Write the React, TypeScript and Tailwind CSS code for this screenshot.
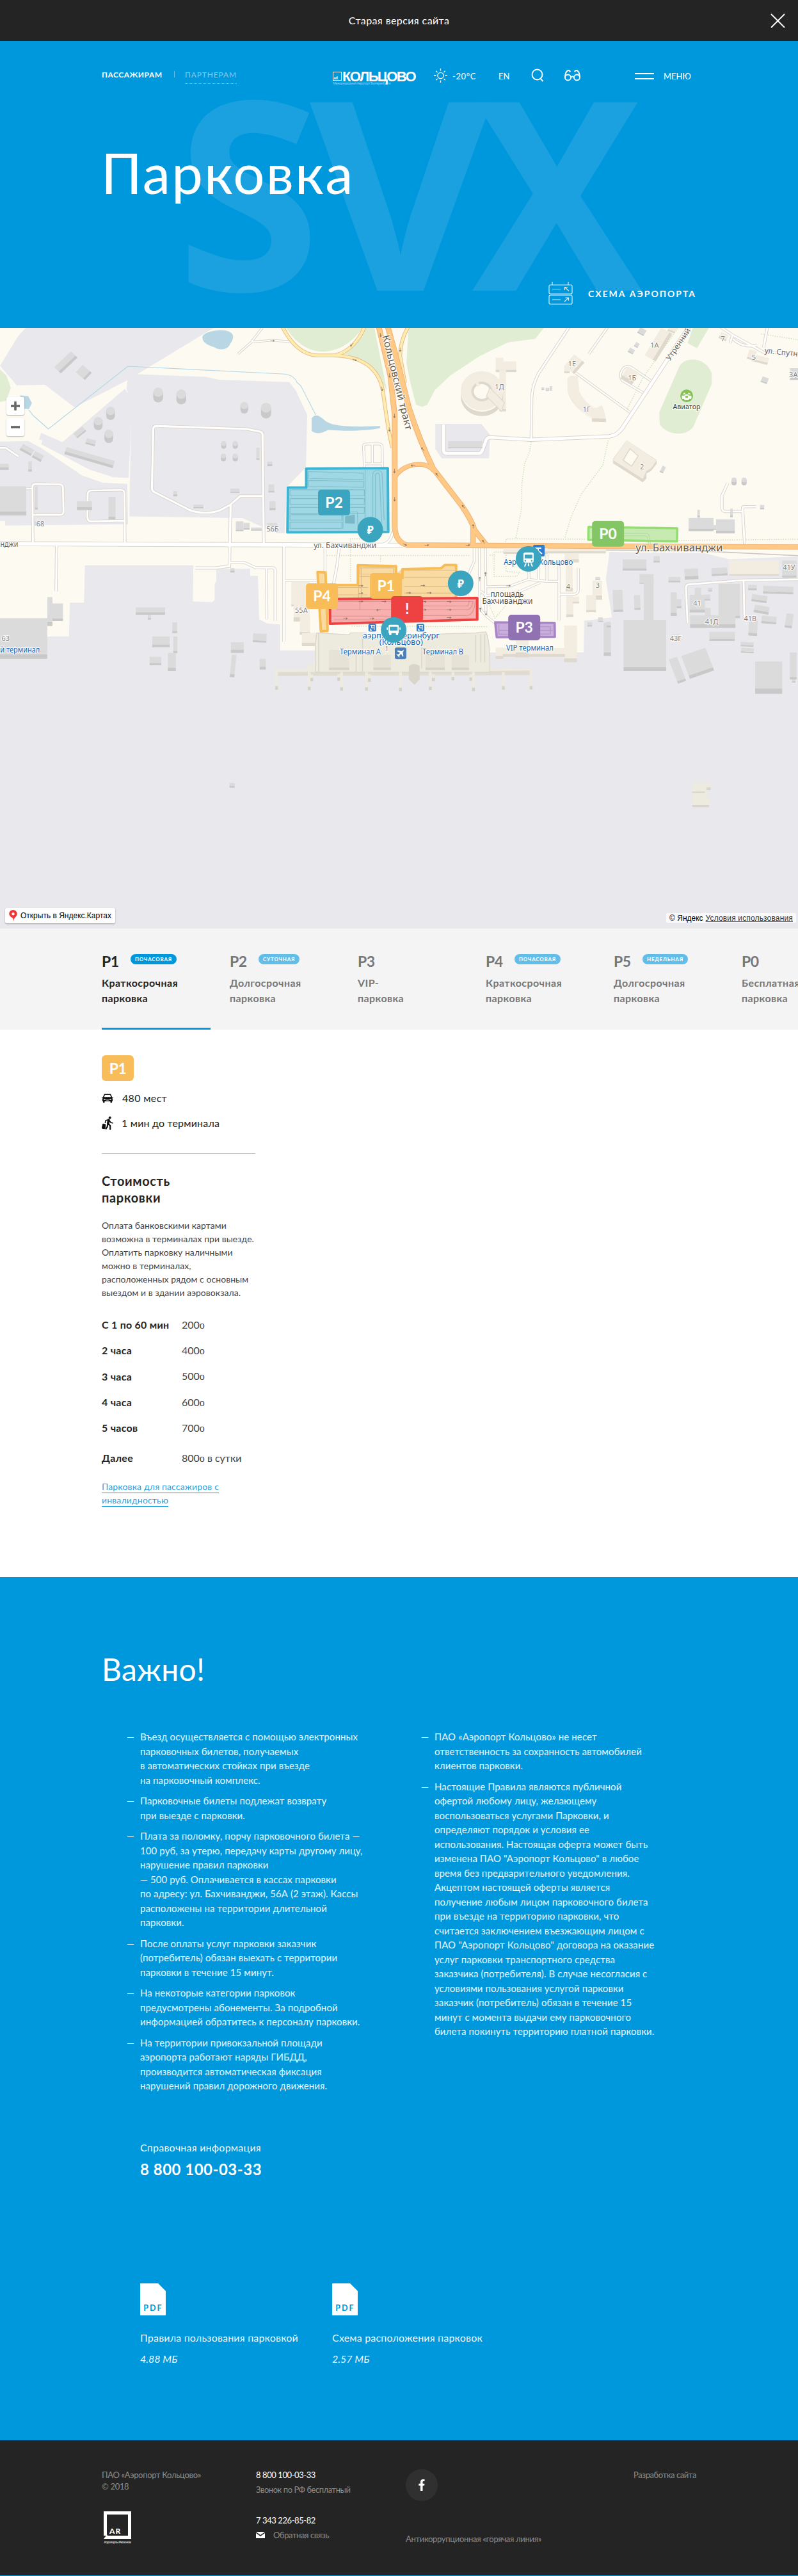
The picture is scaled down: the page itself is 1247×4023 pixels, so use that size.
import React from "react";

/* ---------- Map data (drawing units, left half starts at 0, right half at 1536) ---------- */

const SX = 0.40179;
const SY = 0.38265;
const RX = 1535.6;

type Road = { d: string; w: number };

const LAND = [
  "M105,0 L840,0 L490,222 L290,330 L175,238 L65,240 L0,160 L70,40 Z",
  "M498,193 L800,205 L850,217 L1125,227 L1150,260 L1195,360 L1190,575 L1115,655 L1108,843 L1075,843 L943,782 L503,775 L505,640 L512,300 L492,255 Z",
  "M485,255 L515,290 L500,618 L440,615 L350,585 L160,480 L165,465 L152,460 L160,434 L243,472 Z",
  "M0,470 L110,467 L160,495 L320,608 L400,637 L495,642 L498,807 L20,812 L20,793 L0,793 Z",
  "M0,1265 L268,1265 L272,1127 L327,1127 L330,975 L752,975 L750,1122 L825,1125 L835,1115 L835,1050 L841,1040 L841,990 L973,988 L973,1017 L1003,1017 L1008,1195 L1040,1212 L1090,1216 L1090,1322 L1225,1322 L1225,1330 L2270,1330 L2272,1200 L2380,1187 L2356,1030 L2371,920 L2741,925 L2836,950 L3110,938 L3110,2470 L0,2470 Z",
  "M1693,397 L1872,397 L1906,442 L1902,538 L1718,538 L1693,500 Z",
];
const GREEN = [
  "M0,175 L25,200 L42,250 L25,302 L0,308 Z",
  "M1110,0 L1412,0 C1350,110 1200,160 1110,0 Z",
  "M1424,0 L1455,0 L1505,262 L1465,190 L1400,135 L1340,110 Z",
  "M1590,0 L2120,0 L2081,50 L1976,65 L1866,120 L1751,200 L1691,260 L1661,320 L1641,328 L1618,318 L1596,230 L1581,150 L1586,50 Z",
  "M2641,165 C2660,120 2745,122 2768,190 L2768,235 L2696,410 C2666,450 2596,445 2566,400 L2564,350 Z",
  "M2696,0 L2760,0 L2711,88 L2674,68 Z",
];
const WATER = [
  "M787,45 C790,20 850,10 885,18 C915,28 910,50 893,75 C885,95 850,98 835,85 C810,75 790,70 787,45 Z",
  "M78,280 L110,284 L124,312 L112,337 L92,335 Z",
  "M1212,375 C1225,355 1240,360 1265,385 C1290,405 1350,412 1478,406 L1478,415 C1400,430 1330,425 1275,422 C1245,440 1225,438 1212,425 Z",
];
const ROADS: Road[] = [
  { d: "M0,886 L1568,893", w: 15 },
  { d: "M128,880 L126,655 Q126,642 140,642 L232,644 Q245,645 245,660 L247,755 Q247,769 232,769 L128,769", w: 7 },
  { d: "M0,662 L124,662", w: 5 },
  { d: "M486,880 L484,680 Q484,667 470,667 L355,669 Q341,670 341,685 L340,780 Q342,795 355,795 L484,792", w: 7 },
  { d: "M220,890 L218,1080", w: 7 },
  { d: "M0,495 L22,495 L72,530", w: 7 },
  { d: "M1026,885 L1021,440 Q1020,430 1008,428 L960,418 L610,406 Q596,406 596,418 L591,660 Q592,672 600,675 L740,750 Q800,770 855,750 L895,728 L934,692 L1021,692", w: 8 },
  { d: "M897,728 L892,978 L840,985 L760,985", w: 8 },
  { d: "M892,963 L950,963 L994,984 L1060,984 Q1070,986 1070,995 L1070,1200", w: 7 },
  { d: "M1036,985 L1038,1195", w: 6 },
  { d: "M1104,895 L1104,1285", w: 7 },
  { d: "M1104,1036 L1264,1036 L1264,895", w: 6 },
  { d: "M1320,895 L1310,980 L1292,1080", w: 7 },
  { d: "M1418,575 L1414,490 Q1414,479 1425,479 L1476,479 Q1486,480 1486,492 L1488,575 M1448,479 L1448,560 M1418,560 L1488,560", w: 6 },
  { d: "M1490,888 Q1522,880 1528,835", w: 7 },
  { d: "M1020,5 L978,63 L925,112 M978,63 L1060,56 L1130,62", w: 5 },
  { d: "M1725,400 L1725,505 Q1726,518 1740,518 L1862,518 Q1872,517 1876,505 L1890,465 Q1894,452 1908,452 L2066,462 L2370,448 Q2400,445 2420,415 L2680,0", w: 12 },
  { d: "M2066,462 L2068,290 Q2070,240 2095,190 L2215,0", w: 7 },
  { d: "M2365,0 L2290,112", w: 6 },
  { d: "M2450,350 L2240,190", w: 6 },
  { d: "M2500,270 L2420,220 Q2405,195 2425,170 Q2440,155 2460,170 L2530,220", w: 6 },
  { d: "M2800,0 L2850,35 L2970,105 L3110,110 M2850,30 L2840,68 M2850,50 Q2890,90 2945,75 M2970,85 L2985,0", w: 7 },
  { d: "M2896,890 L2888,740 Q2888,735 2898,735 L2940,735 M2888,755 L2820,755 Q2808,753 2808,740 L2808,690 L2830,640", w: 7 },
  { d: "M2674,1210 L2668,1065 Q2668,1053 2680,1052 L2890,1035 L3110,1032 M2892,1035 L2895,1190", w: 7 },
  { d: "M1844,900 L1844,960 L1818,1020 L1818,1100 M1864,900 L1866,1140 Q1868,1170 1940,1220 M1888,900 L1890,1180", w: 6 },
  { d: "M1890,1062 L1980,1060 L2055,1032 L2125,1040 L2174,1040 M1870,1080 L1890,1098 L2010,1086 L2100,1045 M2057,1000 L2057,1035 M2092,930 L2094,1035 M2127,930 L2127,1038 M2174,960 L2174,1200 M2174,1092 L2235,1092 Q2249,1090 2249,1075 L2249,985", w: 6 },
];
const ORANGE: Road[] = [
  { d: "M1473,0 L1518,200 L1535,360 L1535,820 Q1540,882 1585,892 L3110,900", w: 17 },
  { d: "M1508,0 L1540,120 L1590,330 Q1630,460 1685,580 L1795,730 Q1835,790 1845,830 L1890,890", w: 17 },
  { d: "M1538,610 Q1570,565 1626,562 Q1670,562 1688,590", w: 14 },
  { d: "M1840,815 L1840,890", w: 16 },
];
const YELLOW: Road[] = [
  { d: "M1098,0 Q1150,110 1230,118 L1300,118 C1360,105 1400,50 1418,0", w: 10 },
  { d: "M1300,118 C1430,122 1480,190 1490,270 C1502,360 1512,440 1526,495", w: 10 },
  { d: "M1588,0 Q1556,60 1556,120 L1575,230", w: 10 },
];
const PATHS = [
  "M1272,934 L1830,934",
  "M1363,1040 L1363,866 L1430,866 M1480,938 L1480,960",
  "M1368,1223 L1900,1225",
  "M2066,470 L2060,510 L2040,560 L2030,640 L2029,740 L2006,866 M1966,880 L1970,866 L2280,868",
  "M2365,465 L2345,565 L2260,685 L2220,780 L2196,866",
  "M2640,873 L3110,868",
  "M1904,933 L1925,933 M1967,920 L1922,920 L1922,1020 L2010,1020 L2020,1003 L1968,1000 L1968,925",
  "M2440,335 L2500,210 L2640,0",
  "M1900,1130 L1925,1190 L1990,1110",
  "M2960,30 L3110,55",
];

/* x, y, width, height, depth of the shaded side, rotation */
type Box = [number, number, number, number, number, number?];
const GREY: Box[] = [
  [206, 130, 92, 24, 12, -45], [302, 165, 40, 38, 10, -48],
  [285, 420, 46, 18, 7, -40], [335, 460, 38, 16, 8, 15], [252, 520, 196, 18, 12, 17],
  [82, 490, 50, 18, 10, 30], [130, 517, 40, 18, 10, 30],
  [110, 550, 14, 32, 10], [0, 560, 34, 14, 11], [136, 652, 11, 86, 9], [0, 652, 102, 102, 17],
  [299, 713, 59, 24, 12], [422, 695, 27, 80, 12], [134, 795, 28, 14, 3],
  [674, 672, 15, 12, 9], [752, 727, 39, 9, 6], [896, 661, 35, 12, 6],
  [997, 494, 12, 43, 7], [1040, 551, 19, 11, 8], [1044, 644, 23, 26, 7], [1048, 713, 24, 27, 10],
  [917, 795, 30, 34, 6], [947, 801, 24, 22, 6], [976, 820, 42, 7, 6], [1040, 802, 38, 30, 5],
  [184, 1104, 20, 100, 18], [204, 1130, 41, 60, 12], [0, 1190, 184, 148, 18],
  [528, 1146, 114, 20, 10], [575, 1176, 12, 12, 8], [670, 1207, 19, 35, 9], [592, 1265, 68, 32, 12],
  [674, 1265, 16, 60, 8], [653, 1332, 31, 60, 14], [582, 1348, 45, 25, 9],
  [898, 1288, 50, 30, 14], [984, 1253, 53, 28, 8, 3], [898, 1340, 18, 78, 13, 5], [1010, 1356, 24, 32, 12],
  [896, 986, 16, 10, 8],
  [1743, 468, 133, 24, 5],
  [2106, 248, 10, 8, 3], [2122, 250, 14, 10, 4], [2138, 243, 10, 14, 4],
  [2484, 8, 28, 20, 6, 30], [2470, 66, 16, 14, 5, 30], [2446, 90, 22, 14, 6, 30], [2572, 570, 14, 22, 6, 25],
  [2962, 207, 26, 18, 6, 20], [3072, 170, 32, 36, 12],
  [2712, 748, 10, 22, 10], [2840, 743, 10, 26, 10], [2956, 728, 16, 10, 8],
  [2678, 781, 97, 43, 11], [2775, 810, 12, 14, 6], [2785, 787, 73, 45, 12],
  [2422, 950, 92, 36, 10], [2542, 937, 24, 18, 8], [2600, 1022, 46, 14, 8], [2662, 988, 53, 30, 14, -3],
  [2767, 984, 62, 24, 9, -3], [2487, 1010, 55, 36, 4], [2504, 1040, 38, 158, 1], [2384, 1075, 38, 80, 10, -2],
  [2466, 1096, 24, 52, 8, -2], [2608, 1085, 24, 82, 14], [2632, 1113, 18, 27, 10],
  [2425, 1197, 166, 193, 16], [2348, 1208, 28, 122, 14], [2284, 1206, 19, 12, 6], [2360, 1205, 15, 14, 9],
  [2326, 1187, 19, 14, 4], [2315, 1022, 19, 10, 3],
  [2682, 1095, 60, 60, 12], [2702, 1065, 25, 30, 0], [2740, 1094, 22, 18, 6], [2794, 1050, 84, 130, 10],
  [2684, 1178, 176, 36, 16], [2742, 1148, 22, 40, 0], [2754, 1066, 16, 10, 5], [2759, 1246, 99, 28, 9],
  [2612, 1256, 34, 20, 6], [2912, 1200, 34, 50, 12, 3], [2968, 1060, 118, 22, 9, 2], [2910, 1054, 34, 14, 8, 3],
  [2924, 1096, 60, 20, 9, 8], [2934, 1140, 58, 20, 11, 10], [2962, 1182, 58, 22, 9, 5], [3056, 1172, 28, 48, 10, 8],
  [2881, 1288, 50, 12, 6, 3], [2882, 1312, 50, 14, 6, 3], [2937, 1367, 105, 110, 22], [2661, 1325, 100, 85, 14, -20],
  [2616, 1350, 34, 95, 10, -20], [3042, 955, 56, 60, 10], [3072, 1330, 26, 100, 10], [3080, 1440, 14, 8, 5],
  [893, 1863, 20, 11, 8],
];
const BEIGE: Box[] = [
  [1928, 127, 30, 20, 8], [1928, 142, 80, 34, 10], [1942, 176, 26, 160, 10],
  [2198, 130, 62, 40, 12, -50], [2194, 160, 22, 22, 8],
  [2490, 52, 130, 36, 14, -60], [2600, 0, 30, 16, 8, 20], [2428, 172, 52, 42, 16, 30],
  [2910, 96, 30, 32, 8, 15], [2926, 120, 64, 20, 9, 15], [2800, 28, 32, 18, 9, 25],
  [2836, 954, 193, 56, 7], [1958, 905, 172, 14, 9], [2120, 907, 236, 10, 9],
  [2196, 925, 55, 24, 14], [2200, 962, 28, 103, 16], [2202, 1100, 28, 74, 12], [2228, 1102, 24, 20, 8],
  [2304, 1037, 38, 60, 18], [2280, 1096, 38, 60, 10],
  [2194, 1220, 50, 134, 16], [1928, 1310, 30, 34, 12], [1955, 1312, 242, 24, 12], [2006, 1280, 50, 50, 20],
  [1133, 1042, 72, 92, 8], [1142, 1130, 62, 56, 18], [1166, 1180, 40, 66, 12], [1174, 1250, 60, 40, 14],
];
const TANKS: [number, number, number][] = [
  [615, 268, 19], [705, 276, 19], [950, 322, 15], [1035, 331, 20], [430, 344, 17], [382, 386, 17], [423, 438, 17],
  [870, 477, 10], [915, 477, 10], [869, 528, 10], [915, 528, 10], [2855, 626, 10], [2894, 626, 10],
];
const PIERS: [number, number, number][] = [
  [1070, 1400, 80], [1197, 1410, 72], [1207, 1420, 26], [1312, 1420, 24], [1323, 1410, 74], [1420, 1410, 74], [1431, 1420, 28],
  [1552, 1410, 76], [1668, 1410, 72], [1680, 1420, 26], [1756, 1410, 32], [1826, 1420, 24], [1836, 1410, 76], [1952, 1410, 70], [2060, 1395, 84],
];
const ARROWS: [number, number, number][] = [
  [1480, 35, 80], [1515, 200, 85], [1534, 365, 90], [1534, 590, 90], [1535, 705, 90], [1486, 255, 80], [1514, 420, 85],
  [1380, 136, 25], [1060, 58, 0], [1368, 75, 135], [1556, 95, 90], [1644, 500, 230], [1606, 567, 180], [1700, 605, 230],
  [1802, 735, 230], [1840, 815, 270], [1880, 878, 240], [1660, 892, 0], [1820, 892, 0], [1575, 890, 30],
  [1404, 1058, 0], [1404, 1088, 0], [1404, 1122, 0], [1494, 1122, 0], [1472, 1157, 180], [1344, 1192, 0], [1447, 1192, 0],
  [1645, 1057, 0], [1590, 1087, 0], [1670, 1087, 0], [1650, 1123, 0], [1747, 1123, 0], [1650, 1156, 0], [1747, 1156, 0], [1747, 1188, 0],
  [1866, 1030, 270], [1888, 1010, 270], [1868, 1155, 270], [1890, 1170, 90], [1978, 1058, 0],
];

function MapBox({ b, top, side }: { b: Box; top: string; side: string }) {
  const [x, y, w, h, d, r] = b;
  return (
    <g transform={r ? `rotate(${r} ${x + w / 2} ${y + h / 2})` : undefined}>
      <rect x={x} y={y + h} width={w} height={d} fill={side} />
      <rect x={x} y={y} width={w} height={h} fill={top} />
    </g>
  );
}

/* Label centred on a point given in drawing units */
function Label(p: { x: number; y: number; s?: number; c?: string; r?: number; len?: number; children: string }) {
  const px = p.x * SX;
  const py = p.y * SY;
  return (
    <text
      x={px}
      y={py}
      dy="0.35em"
      textAnchor="middle"
      fontSize={p.s ?? 12}
      fill={p.c ?? "#8a857c"}
      stroke="#fff"
      strokeOpacity={0.75}
      strokeWidth={2.5}
      strokeLinejoin="round"
      paintOrder="stroke"
      textLength={p.len}
      lengthAdjust="spacingAndGlyphs"
      transform={p.r ? `rotate(${p.r} ${px} ${py})` : undefined}
    >
      {p.children}
    </text>
  );
}

function Badge({ x, y, c, t }: { x: number; y: number; c: string; t: string }) {
  return (
    <g>
      <rect x={x * SX} y={y * SY} width={50} height={40} rx={5} fill={c} />
      <text x={x * SX + 25} y={y * SY + 28} textAnchor="middle" fontSize={23} fontWeight={700} fill="#fff" fontFamily="Lato">
        {t}
      </text>
    </g>
  );
}

function AirportMap() {
  const blue = "#1a66b5";
  return (
    <svg className="block h-[938px] w-full" viewBox="0 2 1247 938" fontFamily="'Noto Sans', sans-serif">
      <rect width="1247" height="942" fill="#fdfbf1" />
      <g transform={`scale(${SX} ${SY})`}>
        {LAND.map((d) => <path key={d} d={d} fill="#e9e8ed" />)}
        {GREEN.map((d) => <path key={d} d={d} fill="#e0edd2" />)}
        {WATER.map((d) => <path key={d} d={d} fill="#b9d6e4" />)}
        <path d="M112,340 L128,362 L188,418 L497,162 L1110,194 Q1145,200 1155,228 L1170,242 L1228,360" fill="none" stroke="#b5d7e6" strokeWidth="3" />
        {PATHS.map((d) => <path key={d} d={d} fill="none" stroke="#cfe0bd" strokeWidth="4" strokeDasharray="4 5" />)}
        {ROADS.map((r) => <path key={r.d} d={r.d} fill="none" stroke="#dad4cb" strokeWidth={r.w + 5} />)}
        {ROADS.map((r) => <path key={r.d} d={r.d} fill="none" stroke="#fff" strokeWidth={r.w} />)}
        {YELLOW.map((r) => <path key={r.d} d={r.d} fill="none" stroke="#e8bd86" strokeWidth={r.w + 5} />)}
        {YELLOW.map((r) => <path key={r.d} d={r.d} fill="none" stroke="#ffecb0" strokeWidth={r.w} />)}
        {ORANGE.map((r) => <path key={r.d} d={r.d} fill="none" stroke="#eeb277" strokeWidth={r.w + 5} />)}
        {ORANGE.map((r) => <path key={r.d} d={r.d} fill="none" stroke="#ffc985" strokeWidth={r.w} />)}
        <path d="M2356,912 L2700,915 L3110,935" fill="none" stroke="#c9c6c4" strokeWidth="4" />

        {GREY.map((b, i) => <MapBox key={i} b={b} top="#dbdbdb" side="#c9c9c9" />)}
        {BEIGE.map((b, i) => <MapBox key={i} b={b} top="#f2ece1" side="#dfd8cc" />)}
        {TANKS.map(([x, y, r]) => (
          <g key={`${x}-${y}`}>
            <path d={`M${x - r},${y} v${r * 1.2} a${r},${r} 0 0 0 ${r * 2},0 v${-r * 1.2} z`} fill="#c9c9c9" />
            <circle cx={x} cy={y} r={r} fill="#dbdbdb" />
          </g>
        ))}

        {/* round office building */}
        <path d="M1792,265 a80,80 0 0 0 165,0 v22 a82,78 0 0 1 -165,0 z" fill="#dfd8cc" />
        <ellipse cx="1874" cy="262" rx="82" ry="80" fill="#f2ece1" />
        <ellipse cx="1874" cy="265" rx="36" ry="35" fill="#fdfbf1" stroke="#dfd8cc" strokeWidth="10" />
        <path d="M1905,250 L1962,310 L1950,346 L1892,284 Z" fill="#f2ece1" stroke="#dfd8cc" strokeWidth="3" />
        <path d="M1848,225 l10,-5 l8,22 l-10,4z" fill="#f2ece1" />
        {/* curved residential block */}
        <path d="M2206,215 Q2212,195 2247,203 L2253,265 Q2280,320 2320,333 L2340,320 Q2355,350 2357,390 L2302,388 L2302,370 Q2225,330 2207,262 Z" fill="#f2ece1" />
        <path d="M2207,262 L2214,280 Q2240,340 2302,373 L2302,388 L2357,390 L2357,376 L2300,374 Q2225,330 2207,262 Z" fill="#dfd8cc" />
        {/* school */}
        <path d="M2437,464 L2554,545 L2554,560 L2532,590 L2514,600 L2514,620 L2500,636 L2384,558 L2384,540 Z" fill="#dfd8cc" />
        <path d="M2437,464 L2554,547 L2532,578 L2514,590 L2500,622 L2384,545 Z" fill="#f2ece1" />
        <path d="M2450,498 L2482,528 L2456,570 L2424,545 Z" fill="#fdfbf1" stroke="#dfd8cc" strokeWidth="4" />

        {/* terminal building with piers */}
        <path d="M1072,1398 L1197,1398 L1197,1380 L1225,1380 L1225,1410 L2070,1393 L2070,1422 L1072,1426 Z" fill="#dfdbd0" />
        <path d="M1072,1398 L1195,1398 L1195,1380 L1225,1380 L1225,1410 L1080,1410 Z M1905,1395 L2072,1393 L2072,1404 L1905,1406 Z" fill="#edeae0" />
        <path d="M1232,1250 L1358,1258 L1362,1250 L1424,1250 L1424,1262 L1640,1262 L1700,1255 L1850,1250 L1890,1246 Q1908,1290 1905,1410 L1228,1410 Q1222,1300 1232,1250 Z" fill="#edeade" stroke="#d9d4c9" strokeWidth="3" />
        {PIERS.map(([x, y, h]) => (
          <g key={`${x}-${y}`}>
            <rect x={x} y={y} width={11} height={h - 12} fill="#edeae0" />
            <rect x={x} y={y + h - 12} width={11} height={14} fill="#d6d1c6" />
          </g>
        ))}
        <path d="M1280,1320 h78 v78 h-78 z M1452,1340 h68 v58 h-68 z M1655,1320 h75 v78 h-75 z M1757,1340 h67 v58 h-67 z" fill="#e6e2d6" />
        <path d="M1280,1392 h78 v10 h-78 z M1452,1392 h68 v10 h-68 z M1655,1392 h75 v10 h-75 z M1757,1392 h67 v10 h-67 z" fill="#d8d3c8" />
        <path d="M1240,1252 v158 M1385,1320 v90 M1410,1260 v150 M1640,1265 v130 M1850,1260 v110 M1870,1255 v115 M1885,1255 v115" stroke="#dcd7cb" strokeWidth="4" />
        <path d="M1590,1385 Q1610,1370 1632,1385 V1440 L1612,1462 L1590,1440 Z" fill="#dad5ca" />

        {/* parking zones */}
        <path d="M1191,580 L1508,578 L1510,838 L1118,840 L1120,657 L1191,657 Z" fill="#9fd8e4" />
        <path d="M1200,592 L1413,598 V624 L1200,620 Z M1200,628 L1415,632 V656 L1200,652 Z M1128,666 H1417 V690 H1128 Z M1128,702 H1417 V726 H1128 Z M1128,738 H1417 V762 H1128 Z M1128,768 H1330 V790 H1128 Z M1128,798 H1330 V824 H1128 Z M1420,585 V790 M1450,800 V600 Q1452,588 1468,588 Q1484,588 1486,600 L1494,790 M1460,800 V605 Q1470,590 1476,605 L1484,800 M1334,824 V770 Q1340,756 1390,756 L1392,820" fill="none" stroke="#82bfcc" strokeWidth="3" />
        <path d="M1342,775 l38,-8 v38 l-38,-2z" fill="#79b9c7" />
        <path d="M1191,580 L1508,578 L1510,838 L1118,840 L1120,657 L1191,657 Z" fill="none" stroke="#3bb5d3" strokeWidth="10" strokeLinejoin="round" />

        <path d="M1282,1055 H1392 V974 L1540,978 V1008 L1568,985 V1105 H1282 Z M1565,990 L1716,986 L1730,973 H1774 V1105 H1560 Z" fill="#f9dba2" />
        <path d="M1400,985 H1530 V1010 H1400 Z M1400,1020 H1530 V1045 M1310,1065 H1430 M1310,1095 H1430 M1395,985 V1105 M1405,985 V1105 M1572,995 H1770 M1572,1024 H1770 M1572,1060 H1770 M1572,1088 H1770" fill="none" stroke="#e0bd86" strokeWidth="3" />
        <path d="M1282,1105 V1055 H1392 V974 L1540,978 V1030 M1565,1030 V990 L1716,986 L1730,973 H1774 V1105" fill="none" stroke="#f7bc55" strokeWidth="10" strokeLinejoin="round" />
        <path d="M1235,1002 L1266,1004 L1274,1242 L1248,1244 Z" fill="#f9dba2" stroke="#f7bc55" strokeWidth="10" strokeLinejoin="round" />

        <path d="M1282,1112 L1856,1108 V1196 L1284,1213 Z" fill="#f7b0ae" />
        <path d="M1310,1122 H1530 M1310,1155 H1520 M1290,1182 H1520 M1300,1197 H1520 M1645,1122 H1840 M1645,1140 H1820 L1826,1118 M1645,1156 H1815 Q1836,1154 1840,1120 M1645,1180 H1815 Q1846,1175 1848,1120 M1400,1112 V1155 M1288,1150 V1190" fill="none" stroke="#df9294" strokeWidth="3" />
        <path d="M1282,1112 L1856,1108 V1196 L1284,1213 Z" fill="none" stroke="#ee4142" strokeWidth="10" strokeLinejoin="round" />

        <path d="M2289,818 L2634,823 L2633,877 L2288,870 Z" fill="#c7eab2" />
        <path d="M2426,843 H2515 Q2529,845 2529,890 M2426,854 H2510 Q2522,856 2522,890" fill="none" stroke="#b5d9a2" strokeWidth="3" />
        <path d="M2289,818 L2634,823 L2633,877 L2288,870 Z" fill="none" stroke="#93de70" strokeWidth="9" strokeLinejoin="round" />
        <path d="M1926,1207 L2157,1209 L2158,1266 L1932,1268 Z" fill="#c9aede" />
        <path d="M1940,1215 V1256 H2005 M1940,1240 H2005 M2100,1225 H2140 V1255 H2100 M2100,1240 H2150" fill="none" stroke="#b39ac9" strokeWidth="4" />
        <path d="M1926,1207 L2157,1209 L2158,1266 L1932,1268 Z" fill="none" stroke="#a984c9" strokeWidth="9" strokeLinejoin="round" />

        {ARROWS.map(([x, y, r], i) => (
          <path key={i} transform={`translate(${x} ${y}) rotate(${r})`} d="M-9,-1 H2 V-5 L9,0 L2,5 V1 H-9 Z" fill="#6f5f51" opacity="0.75" />
        ))}

        {/* small buildings on the airfield */}
        <path d="M2692,1862 h72 v24 h-14 v38 h10 v36 h-68 z" fill="#edeae0" />
        <path d="M2692,1898 h50 v5 h-50 z M2692,1952 h66 v9 h-66 z M2748,1880 h16 v12 h-16 z" fill="#d9d5cb" />
      </g>

      <Label x={157} y={806} s={11}>68</Label>
      <Label x={1060} y={827} s={11}>56Б</Label>
      <Label x={1172} y={1158} s={11}>55А</Label>
      <Label x={22} y={1273} s={11}>63</Label>
      <Label x={1504} y={1317} s={10}>1</Label>
      <Label x={RX + 407} y={245} s={11}>1Д</Label>
      <Label x={RX + 689} y={153} s={11}>1Е</Label>
      <Label x={RX + 746} y={338} s={11}>1Г</Label>
      <Label x={RX + 923} y={210} s={11}>1Б</Label>
      <Label x={RX + 1010} y={77} s={11}>1А</Label>
      <Label x={RX + 961} y={573} s={11}>2</Label>
      <Label x={RX + 1276} y={49} s={11}>7</Label>
      <Label x={RX + 1396} y={126} s={11}>5</Label>
      <Label x={RX + 1550} y={196} s={11}>3А</Label>
      <Label x={RX + 674} y={1062} s={11}>4</Label>
      <Label x={RX + 789} y={1057} s={11}>3</Label>
      <Label x={RX + 1533} y={984} s={11}>41У</Label>
      <Label x={RX + 1176} y={1130} s={11}>41</Label>
      <Label x={RX + 1232} y={1204} s={11}>41Д</Label>
      <Label x={RX + 1382} y={1193} s={11}>41В</Label>
      <Label x={RX + 1092} y={1272} s={11}>43Г</Label>
      <Label x={36} y={888} s={12} c="#6b675e" len={28}>нджи</Label>
      <Label x={1342} y={893} s={12} c="#6b675e" len={98}>ул. Бахчиванджи</Label>
      <Label x={RX + 1106} y={902} s={17} c="#6b6050" len={136}>ул. Бахчиванджи</Label>
      <Label x={RX + 1503} y={104} s={12} c="#6b675e" r={6} len={52}>ул. Спутн</Label>
      <Label x={RX + 1102} y={72} s={12} c="#6b675e" r={-56} len={58}>Утренний</Label>
      <Label x={RX + 10} y={228} s={15.5} c="#6b5f4e" r={76} len={152}>Кольцовский тракт</Label>
      <Label x={RX + 437} y={1093} s={12} c="#55524c" len={52}>площадь</Label>
      <Label x={RX + 438} y={1120} s={12} c="#55524c" len={79}>Бахчиванджи</Label>
      <Label x={RX + 558} y={960} s={12} c={blue} len={108}>Аэропорт Кольцово</Label>
      <Label x={RX + 525} y={1311} s={12} c={blue} len={74}>VIP терминал</Label>
      <Label x={1401} y={1328} s={12} c={blue} len={64}>Терминал А</Label>
      <Label x={RX + 187} y={1328} s={12} c={blue} len={64}>Терминал В</Label>
      <Label x={1560} y={1263} s={12} c={blue} len={120}>аэрп. Екатеринбург</Label>
      <Label x={1560} y={1287} s={12} c={blue} len={68}>(Кольцово)</Label>
      <Label x={78} y={1318} s={12} c={blue} len={62}>й терминал</Label>
      <Label x={RX + 1135} y={328} s={11} c="#3a3a3a" len={43}>Авиатор</Label>

      {/* transport and service pins */}
      <g transform={`translate(${(RX + 1135) * SX} ${283 * SY})`}>
        <circle r="10" fill="#85c155" />
        <path d="M-6,-3 h3 v-2 M6,-3 h-3 v-2 M-7,0 h4 l1,-2 h4 l1,2 h4 v4 h-3 l-1,2 h-6 l-1,-2 h-3 z" fill="#fff" stroke="#fff" strokeWidth="1" />
        <rect x="-2" y="0" width="4" height="3" fill="#85c155" />
      </g>
      {[1448, 1635].map((x) => (
        <g key={x} transform={`translate(${x * SX - 6} ${1213 * SY})`}>
          <rect width="12" height="12" rx="2" fill="#2f7bd0" />
          <path d="M3,2.500 h7 M5,2.500 v4 h4 v-4 M9,6 v4 M2,10 h3.500 M3,7.500 v2" stroke="#fff" strokeWidth="1.2" fill="none" />
        </g>
      ))}
      <g transform={`translate(${1558 * SX - 9} ${1310 * SY})`}>
        <rect width="18" height="18" rx="3" fill="#4b7fb8" />
        <path transform="translate(9 9) rotate(45) scale(0.9)" d="M0,-8 Q1.300,-7 1.300,-4 L7,0 V1.800 L1.300,0 V4 L3.200,6 V7.200 L0,6.300 L-3.200,7.200 V6 L-1.300,4 V0 L-7,1.800 V0 L-1.300,-4 Q-1.300,-7 0,-8 Z" fill="#fff" />
      </g>
      <rect x={(RX + 538) * SX} y={891 * SY} width="18" height="18" rx="2" fill="#2f7bd0" />
      <path d={`M${(RX + 545) * SX},346 h10 m-5,0 v4 l6,5`} stroke="#fff" strokeWidth="2" fill="none" />

      <Badge x={1237} y={666} c="#3ba4bf" t="P2" />
      <Badge x={1190} y={1048} c="#f8bc58" t="P4" />
      <Badge x={1439} y={1006} c="#f8bc58" t="P1" />
      <Badge x={1521} y={1100} c="#ee4142" t="!" />
      <Badge x={RX + 441} y={1176} c="#9071b1" t="P3" />
      <Badge x={RX + 767} y={794} c="#84c666" t="P0" />
      {[[1440, 829], [RX + 256, 1048]].map(([x, y]) => (
        <g key={x}>
          <circle cx={x * SX} cy={y * SY} r="20" fill="#3ba4bf" />
          <text x={x * SX} y={y * SY + 7} textAnchor="middle" fontSize="17" fontWeight="700" fill="#fff">₽</text>
        </g>
      ))}
      <g transform={`translate(${(RX + 520) * SX} ${948 * SY})`}>
        <circle r="20" fill="#3ba4bf" />
        <rect x="-8" y="-10" width="16" height="16" rx="3" fill="#fff" />
        <rect x="-6" y="-6.500" width="12" height="6" fill="#3ba4bf" />
        <path d="M-4,7 l-2,5 M4,7 l2,5 M0,7 v4.500" stroke="#fff" strokeWidth="2" />
        <circle cx="-5" cy="3" r="1.2" fill="#3ba4bf" /><circle cx="5" cy="3" r="1.2" fill="#3ba4bf" />
      </g>
      <g transform={`translate(${1531 * SX} ${1238 * SY})`}>
        <circle r="20" fill="#3ba4bf" />
        <path d="M-8,-6 q0,-2 2,-2 h12 q2,0 2,2 v11 h-1 v3 h-3.500 v-3 h-7 v3 h-3.500 v-3 h-1z" fill="#fff" />
        <rect x="-6" y="-5" width="12" height="6" fill="#3ba4bf" />
        <path d="M-10,-4 v4 M10,-4 v4" stroke="#fff" strokeWidth="1.6" />
      </g>
    </svg>
  );
}

/* ---------- Content ---------- */

const TABS = [
  { id: "P1", tag: "ПОЧАСОВАЯ", a: "Краткосрочная", active: true },
  { id: "P2", tag: "СУТОЧНАЯ", a: "Долгосрочная" },
  { id: "P3", a: "VIP-" },
  { id: "P4", tag: "ПОЧАСОВАЯ", a: "Краткосрочная" },
  { id: "P5", tag: "НЕДЕЛЬНАЯ", a: "Долгосрочная" },
  { id: "P0", a: "Бесплатная" },
];

const PRICES = [
  ["С 1 по 60 мин", "200"],
  ["2 часа", "400"],
  ["3 часа", "500"],
  ["4 часа", "600"],
  ["5 часов", "700"],
];

const RULES_LEFT = [
  ["Въезд осуществляется с помощью электронных", "парковочных билетов, получаемых", "в автоматических стойках при въезде", "на парковочный комплекс."],
  ["Парковочные билеты подлежат возврату", "при выезде с парковки."],
  ["Плата за поломку, порчу парковочного билета —", "100 руб, за утерю, передачу карты другому лицу,", "нарушение правил парковки", "— 500 руб. Оплачивается в кассах парковки", "по адресу: ул. Бахчиванджи, 56А (2 этаж). Кассы", "расположены на территории длительной", "парковки."],
  ["После оплаты услуг парковки заказчик", "(потребитель) обязан выехать с территории", "парковки в течение 15 минут."],
  ["На некоторые категории парковок", "предусмотрены абонементы. За подробной", "информацией обратитесь к персоналу парковки."],
  ["На территории привокзальной площади", "аэропорта работают наряды ГИБДД,", "производится автоматическая фиксация", "нарушений правил дорожного движения."],
];

const RULES_RIGHT = [
  ["ПАО «Аэропорт Кольцово» не несет", "ответственность за сохранность автомобилей", "клиентов парковки."],
  ["Настоящие Правила являются публичной", "офертой любому лицу, желающему", "воспользоваться услугами Парковки, и", "определяют порядок и условия ее", "использования. Настоящая оферта может быть", "изменена ПАО \"Аэропорт Кольцово\" в любое", "время без предварительного уведомления.", "Акцептом настоящей оферты является", "получение любым лицом парковочного билета", "при въезде на территорию парковки, что", "считается заключением въезжающим лицом с", "ПАО \"Аэропорт Кольцово\" договора на оказание", "услуг парковки транспортного средства", "заказчика (потребителя). В случае несогласия с", "условиями пользования услугой парковки", "заказчик (потребитель) обязан в течение 15", "минут с момента выдачи ему парковочного", "билета покинуть территорию платной парковки."],
];

function Rules({ items }: { items: string[][] }) {
  return (
    <ul className="flex flex-col gap-2.5">
      {items.map((lines) => (
        <li key={lines[0]} className="flex text-[15px] leading-[22.5px] tracking-[0.1px] text-white/90">
          <span className="w-5 shrink-0 -translate-x-px">—</span>
          <div className="whitespace-nowrap">
            {lines.map((l) => <div key={l}>{l}</div>)}
          </div>
        </li>
      ))}
    </ul>
  );
}

function Price({ v }: { v: string }) {
  return <>{v}<span className="font-['Liberation_Serif',serif] text-[16px]">o</span></>;
}

function PdfCard({ title, size }: { title: string; size: string }) {
  return (
    <div className="w-[300px]">
      <svg className="block" width="40" height="50" viewBox="0 0 40 50">
        <path d="M1 0 H28 L40 12 V49 Q40 50 39 50 H1 Q0 50 0 49 V1 Q0 0 1 0 Z" fill="#fff" />
        <text x="20.5" y="43" textAnchor="middle" fontFamily="Lato" fontWeight="700" fontSize="12.5" letterSpacing="2" fill="#0098dc">PDF</text>
      </svg>
      <div className="mt-[23px] text-[16px] leading-6 tracking-[0.19px] whitespace-nowrap text-white/95">{title}</div>
      <div className="mt-[9px] text-[16px] leading-6 text-white/95 italic">{size}</div>
    </div>
  );
}

export default function App() {
  return (
    <div className="w-full overflow-hidden bg-[#0098dc] font-['Lato',sans-serif] text-[#242424]">
      <div className="relative flex h-16 items-center justify-center bg-[#242424] text-[16px] tracking-[0.4px] text-white">
        Старая версия сайта
        <svg className="absolute top-[21px] right-5" width="23" height="23" viewBox="0 0 23 23" stroke="#fff" strokeWidth="1.8">
          <path d="M1 1 L22 22 M22 1 L1 22" />
        </svg>
      </div>

      <header className="relative h-[448px] bg-[#0098dc] text-white">
        <div className="absolute top-[41px] left-[276px] flex text-[412px] leading-[380px] font-bold text-[#1ba1e0] select-none" aria-hidden="true">
          <span className="w-[208px] origin-left scale-x-[0.99] font-['Noto_Sans',sans-serif]">S</span>
          <span className="w-[253px] origin-left scale-x-[1.06] font-['Noto_Sans',sans-serif]">V</span>
          <span className="origin-left scale-x-[0.97] font-['Noto_Sans',sans-serif]">X</span>
        </div>
        <div className="relative ml-[159px] w-[929px]">
          <nav className="flex h-[102px] items-center pt-1.5 text-[12px]">
            <span className="mt-[-3px] w-[95px] font-bold tracking-[0.5px] whitespace-nowrap">ПАССАЖИРАМ</span>
            <span className="mt-[-5px] ml-[18px] h-2.5 w-px bg-white/40" />
            <span className="mt-[3px] ml-4 w-[81px] border-b border-dotted border-white/50 pb-1 tracking-[0.87px] whitespace-nowrap text-white/50">ПАРТНЕРАМ</span>
            <div className="ml-[150px] w-[130px] pt-[7px]">
              <div className="flex h-[17px] items-center">
                <svg width="15" height="14" viewBox="0 0 15 14" fill="none" stroke="#fff">
                  <rect x="0.5" y="0.5" width="13" height="13" />
                  <path d="M2 12 L3.5 8 L5 12 M6 12 V8 H8 L6.500 10 L8.500 12" strokeWidth="1" />
                </svg>
                <span className="font-['Liberation_Sans',sans-serif] text-[22px] leading-[17px] font-bold tracking-[-1.6px]">КОЛЬЦОВО</span>
              </div>
              <div className="text-[5px] leading-[5px] tracking-[-0.25px] whitespace-nowrap text-white/60">Международный Аэропорт Екатеринбурга</div>
            </div>
            <svg className="ml-[28px]" width="21" height="22" viewBox="0 0 21 22" fill="none" stroke="#fff" strokeWidth="1.3">
              <circle cx="10.500" cy="11" r="4.600" />
              <path d="M10.500 0 V3.500 M10.500 18.500 V22 M0 11 H3.500 M17.500 11 H21 M3.200 3.700 L5.500 6 M15.500 16 L17.800 18.300 M17.800 3.700 L15.500 6 M5.500 16 L3.200 18.300" />
            </svg>
            <span className="mt-[3px] ml-[8px] w-[38px] text-[13px] tracking-[0.6px]">-20°C</span>
            <span className="mt-[3px] ml-[34px] w-[17px] text-[13px]">EN</span>
            <svg className="ml-[34px]" width="20" height="22" viewBox="0 0 20 22" fill="none" stroke="#fff" strokeWidth="1.9">
              <circle cx="9.500" cy="9.500" r="8" /><path d="M14 15 L18.500 20" />
            </svg>
            <svg className="ml-[32px]" width="25" height="18" viewBox="0 0 25 18" fill="none" stroke="#fff" strokeWidth="1.900">
              <circle cx="5.500" cy="12" r="4.500" /><circle cx="19.500" cy="12" r="4.500" />
              <path d="M10 12 Q12.500 9 15 12 M1 12 C1 6 3 1 6.500 1 Q8.500 1 9 3.500 M24 12 C24 6 22 1 18.500 1 Q16.500 1 16 3.500" />
            </svg>
            <span className="mt-[2px] ml-[85px] h-[10px] w-[30px] border-y-2 border-white" />
            <span className="mt-[3px] ml-[15px] text-[13px] tracking-[-0.1px]">МЕНЮ</span>
          </nav>
          <h1 className="mt-[50px] ml-[-1px] text-[87px] leading-[108px] tracking-[2.1px]">Парковка</h1>
          <div className="mt-[116px] flex items-center justify-end">
            <svg width="38" height="36" viewBox="0 0 38 36" fill="none" stroke="#fff" strokeOpacity="0.85" strokeWidth="1.200">
              <rect x="1" y="5" width="36" height="14" rx="2" /><rect x="1" y="21" width="36" height="14" rx="2" />
              <path d="M6 0 V5 M31 0 V5 M6 11.500 H19 M6 28 H19 M32 14.500 L25.500 8.500 M25.500 13 V8.500 H30.500 M25 31 L31.500 25 M26.500 25 H31.500 V29.500" />
            </svg>
            <span className="ml-6 text-[14px] font-bold tracking-[1.96px] whitespace-nowrap">СХЕМА АЭРОПОРТА</span>
          </div>
        </div>
      </header>

      <section className="relative h-[938px] overflow-hidden">
        <AirportMap />
        <div className="absolute top-[108px] left-[10px] flex flex-col gap-[5px]">
          {["+", "−"].map((s) => (
            <button key={s} className="flex size-7 items-center justify-center rounded-[3px] bg-white shadow-[0_1px_2px_rgba(0,0,0,0.3)]">
              <svg width="14" height="14" viewBox="0 0 14 14" stroke="#666" strokeWidth="3.600">
                <path d={s === "+" ? "M0 7 H14 M7 0 V14" : "M0 7 H14"} />
              </svg>
            </button>
          ))}
        </div>
        <div className="absolute bottom-[8px] left-[8px] flex h-6 w-[172px] items-center rounded-[3px] bg-white pl-[6px] font-['Liberation_Sans',sans-serif] text-[12px] whitespace-nowrap text-black shadow-[0_1px_2px_rgba(0,0,0,0.35)]">
          <svg className="mr-[5px]" width="13" height="18" viewBox="0 0 13 18">
            <path d="M6.500 0 a6.200 6.200 0 0 1 6.200 6.200 c0 3 -2.400 4.800 -4.400 7.300 l-1.800 4.500 l0 -4.500 C4.500 11.500 0.300 9.500 0.300 6.200 A6.200 6.200 0 0 1 6.500 0z" fill="#f43333" />
            <circle cx="6.500" cy="6.200" r="2.200" fill="#fff" />
          </svg>
          Открыть в Яндекс.Картах
        </div>
        <div className="absolute right-[3px] bottom-[9px] flex h-[15px] w-[203px] items-center justify-center gap-1 rounded-[2px] bg-white/75 font-['Liberation_Sans',sans-serif] text-[12px] whitespace-nowrap text-black">
          © Яндекс <span className="tracking-[0.15px] text-[#333] underline">Условия использования</span>
        </div>
      </section>

      <section className="h-[158px] overflow-hidden bg-[#f4f4f4]">
        <div className="ml-[159px] flex w-[1200px]">
          {TABS.map((t) => (
            <div key={t.id} className={t.active ? "w-[200px] shrink-0 text-[#242424]" : "w-[200px] shrink-0 text-[#777]"}>
              <div className={t.active ? "h-[158px] w-[170px] border-b-[3px] border-[#0098dc] pt-[36px]" : "h-[158px] w-[170px] pt-[36px]"}>
                <div className="flex h-8 items-center">
                  <span className="mt-[-1px] w-[45px] text-[23px] font-bold tracking-[-0.5px]">{t.id}</span>
                  {t.tag && (
                    <span className={t.active ? "mb-2 flex h-4 items-center rounded-full bg-[#0098dc] px-[7px] text-[8px] font-bold tracking-[0.78px] text-white" : "mb-2 flex h-4 items-center rounded-full bg-[#62bee8] px-[7px] text-[8px] font-bold tracking-[0.78px] text-white"}>{t.tag}</span>
                  )}
                </div>
                <div className="mt-[5px] text-[16px] leading-6 font-bold tracking-[0.42px]">{t.a}<br />парковка</div>
              </div>
            </div>
          ))}
        </div>
      </section>

      <section className="h-[855px] bg-white">
        <div className="ml-[159px] w-[240px] pt-10">
          <div className="flex h-10 w-[50px] items-center justify-center rounded-md bg-[#f8bc58] text-[23px] font-bold tracking-[-0.5px] text-white">P1</div>
          <div className="mt-[15px] flex h-6 items-center text-[16px] tracking-[0.33px]">
            <svg className="mr-[14px]" width="18" height="14" viewBox="0 0 18 14">
              <path d="M4 0.500 H14 L16 5 H18 V6 H16 L17 8 V12 H16 V14 H13.500 V12 H4.500 V14 H2 V12 H1 V8 L2 6 H0 V5 H2 Z M5 2 L3.700 5.300 H14.300 L13 2 Z" fill="#111" fillRule="evenodd" />
              <path d="M3 8 h3 v1.600 h-3z M12 8 h3 v1.600 h-3z M7 9.500 h4 v1 h-4z" fill="#fff" />
            </svg>
            480 мест
          </div>
          <div className="mt-[15px] flex h-6 items-center text-[16px] tracking-[0.18px]">
            <svg className="mr-[13px]" width="18" height="22" viewBox="0 0 18 22" fill="none" stroke="#111">
              <circle cx="12.700" cy="2.400" r="2" fill="#111" stroke="none" />
              <path d="M10.800 6 L9.800 12" strokeWidth="3.800" strokeLinecap="round" />
              <path d="M10 12 L13.200 15 V21.500 M9.500 12.500 L8.500 17 L6 20.500" strokeWidth="2.200" />
              <path d="M9 6 L6 7 L5.500 11 M12 7 L14 10 L17.500 11" strokeWidth="1.600" />
              <rect x="1" y="12.500" width="4.500" height="7" rx="1" fill="#111" transform="rotate(12 3 16)" />
            </svg>
            1 мин до терминала
          </div>
          <div className="mt-[35px] h-px bg-[#f8bc58]" />
          <h2 className="mt-[29px] text-[20px] leading-[26px] font-bold tracking-[0.6px]">Стоимость<br />парковки</h2>
          <p className="mt-[20px] text-[14px] leading-[21px] tracking-[0.05px] whitespace-nowrap text-[#444]">
            Оплата банковскими картами<br />возможна в терминалах при выезде.<br />Оплатить парковку наличными<br />можно в терминалах,<br />расположенных рядом с основным<br />выездом и в здании аэровокзала.
          </p>
          <div className="mt-[20px] text-[16px]">
            {PRICES.map(([a, b]) => (
              <div key={a} className="flex h-[40.300px] items-center">
                <span className="w-[125px] font-bold tracking-[0.25px]">{a}</span>
                <span className="text-[#444]"><Price v={b} /></span>
              </div>
            ))}
            <div className="mt-[7px] flex h-[40px] items-center">
              <span className="w-[125px] font-bold tracking-[0.25px]">Далее</span>
              <span className="text-[#444]"><Price v="800" /> в сутки</span>
            </div>
          </div>
          <div className="mt-[16px] flex flex-col items-start gap-[2px] text-[14px] leading-[18px] tracking-[0.16px] text-[#2f9fdc]">
            <span className="border-b border-[#0098dc] whitespace-nowrap">Парковка для пассажиров с</span>
            <span className="border-b border-[#0098dc]">инвалидностью</span>
          </div>
        </div>
      </section>

      <section className="h-[1348px] bg-[#0098dc] text-white">
        <div className="ml-[159px] w-[929px] pt-[115px]">
          <h2 className="text-[48px] leading-[58px] tracking-[0.3px]">Важно!</h2>
          <div className="mt-[65px] ml-10 flex">
            <div className="w-[460px]"><Rules items={RULES_LEFT} /></div>
            <div><Rules items={RULES_RIGHT} /></div>
          </div>
          <div className="mt-[73px] ml-[60px]">
            <div className="text-[16px] leading-6 tracking-[0.22px] text-white/95">Справочная информация</div>
            <div className="mt-[7px] text-[24px] leading-[30px] font-bold tracking-[0.49px]">8 800 100-03-33</div>
          </div>
          <div className="mt-[163px] ml-[60px] flex">
            <PdfCard title="Правила пользования парковкой" size="4.88 МБ" />
            <PdfCard title="Схема расположения парковок" size="2.57 МБ" />
          </div>
        </div>
      </section>

      <footer className="h-[211px] bg-[#242424] text-[13px] text-[#8c8c8c]">
        <div className="ml-[159px] flex w-[929px] pt-[45px]">
          <div className="w-[241px] leading-[18px] tracking-[-0.33px]">
            ПАО «Аэропорт Кольцово»<br />© 2018
            <svg className="mt-[30px] ml-[3px] block" width="44" height="52" viewBox="0 0 44 52">
              <path d="M0 0 H43 V43 H0 L4 38 H0 Z M5 5 V36 Q5 38 7 38 H38 V5 Z" fill="#fff" fillRule="evenodd" />
              <text x="9" y="35" fontFamily="Lato" fontSize="12" fontWeight="900" fill="#fff" textLength="17">AR</text>
              <text x="0.500" y="50" fontFamily="Liberation Sans" fontSize="4.500" fontWeight="700" fill="#ddd" textLength="42" lengthAdjust="spacingAndGlyphs">Аэропорты Регионов</text>
            </svg>
          </div>
          <div className="w-[234px] leading-[18px]">
            <div className="tracking-[-0.42px] text-white">8 800 100-03-33</div>
            <div className="mt-[5px] tracking-[-0.45px]">Звонок по РФ бесплатный</div>
            <div className="mt-[30px] tracking-[-0.42px] text-white">7 343 226-85-82</div>
            <div className="mt-[5px] flex items-center tracking-[-0.4px]">
              <svg className="mr-[13px]" width="14" height="10" viewBox="0 0 14 10"><path d="M0 0 H14 L7 5 Z M0 2 L7 7 L14 2 V10 H0 Z" fill="#fff" /></svg>
              Обратная связь
            </div>
          </div>
          <div className="w-[280px]">
            <div className="flex size-[50px] items-center justify-center rounded-full bg-[#303030]">
              <svg width="10" height="18" viewBox="0 0 10 18"><path d="M3 18 V9.800 H0.300 V6.700 H3 V4.300 C3 1.500 4.500 0 7 0 H9.500 V3 H8 C6.900 3 6.500 3.500 6.500 4.500 V6.700 H9.500 L9.100 9.800 H6.500 V18 Z" fill="#fff" /></svg>
            </div>
            <div className="mt-[50px] leading-[18px] tracking-[-0.31px] whitespace-nowrap">Антикоррупционная «горячая линия»</div>
          </div>
          <div className="flex-1 text-right leading-[18px] tracking-[-0.41px]">Разработка сайта</div>
        </div>
      </footer>
      <div className="h-px bg-[#0098dc]" />
    </div>
  );
}
